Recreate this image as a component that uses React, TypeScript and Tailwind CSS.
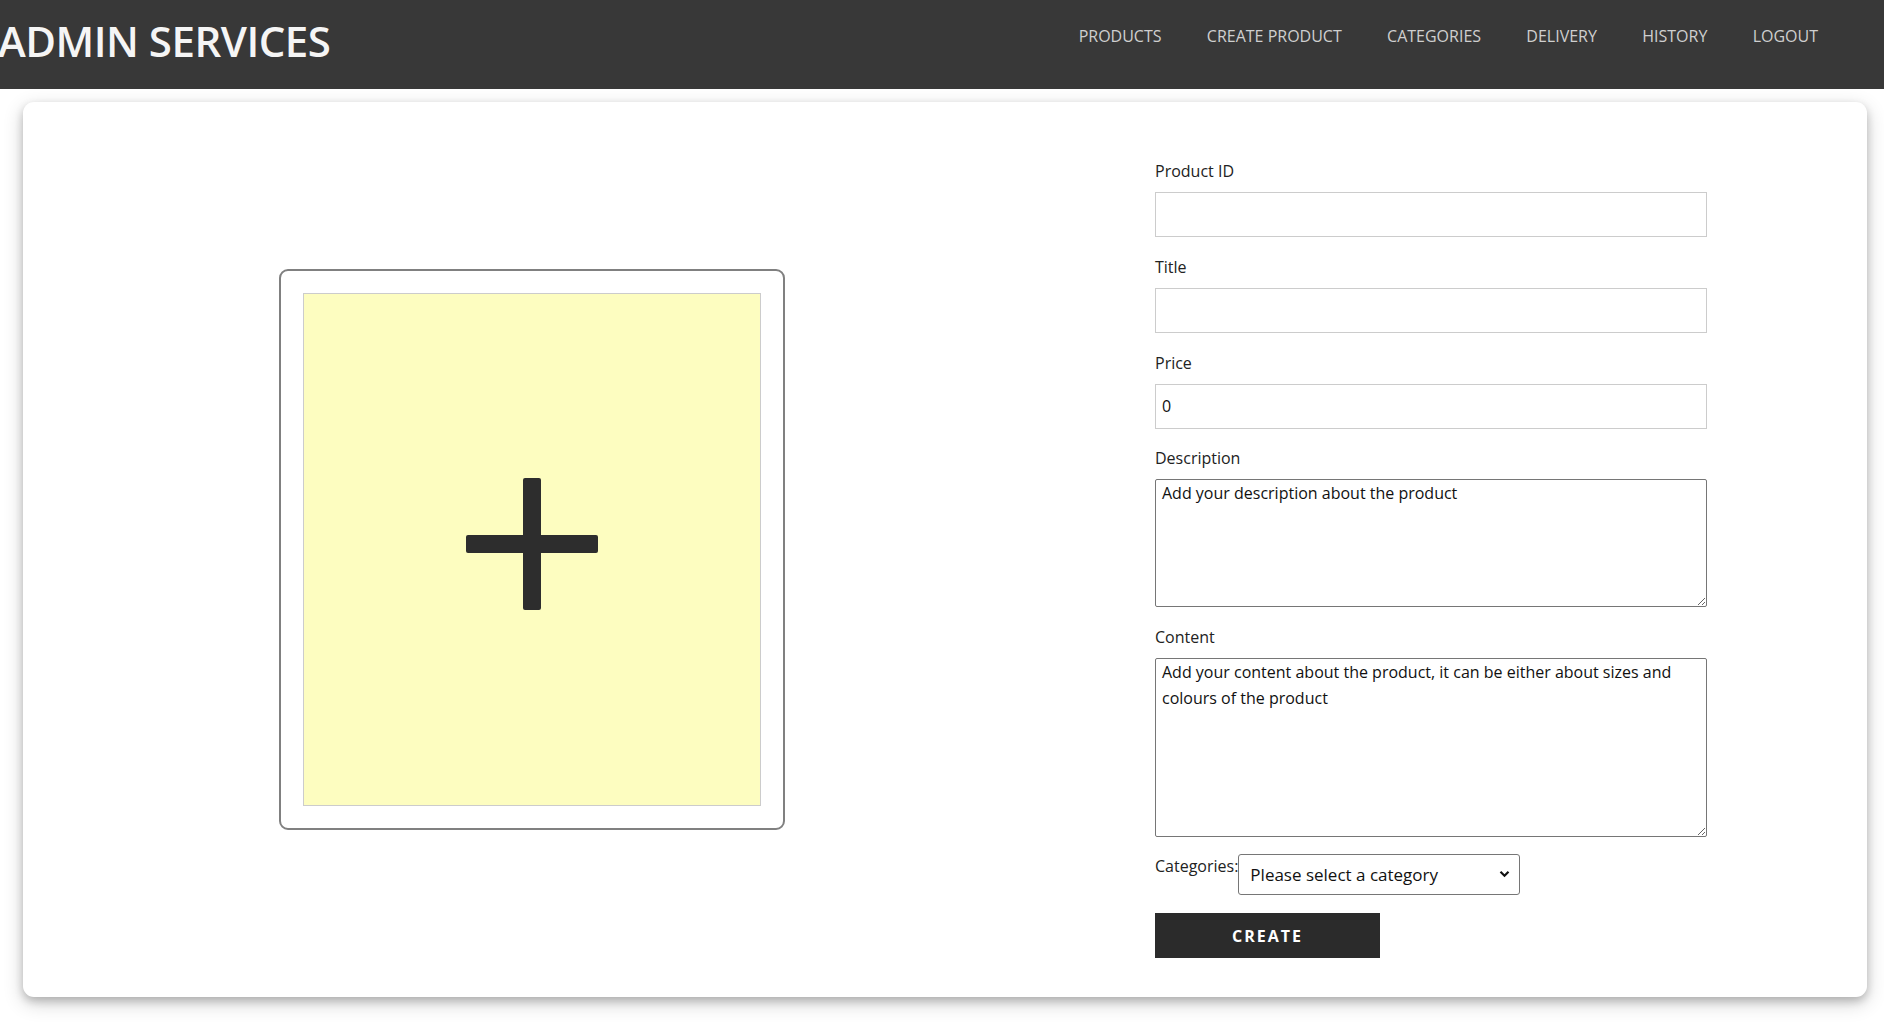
import React from "react";

const font = { fontFamily: '"Open Sans", "Noto Sans", sans-serif' };

function Field({ label, children, mb = "mb-[18px]" }: { label: string; children: React.ReactNode; mb?: string }) {
  return (
    <div className={"flex flex-col " + mb}>
      <label className="block text-[16px] leading-[24px] text-[#222] mb-[9px]">{label}</label>
      {children}
    </div>
  );
}

export default function App() {
  const navItems = ["PRODUCTS", "CREATE PRODUCT", "CATEGORIES", "DELIVERY", "HISTORY", "LOGOUT"];
  return (
    <div className="w-[1884px] h-[1027px] bg-white overflow-hidden" style={font}>
      <header className="h-[89px] bg-[#383838] flex justify-between items-start">
        <h1 className="ml-[-2px] pt-[20px] text-[42px] leading-none font-semibold text-[#f5f5f5] tracking-[-0.5px] whitespace-nowrap">
          ADMIN SERVICES
        </h1>
        <nav className="flex gap-[45.3px] pt-[24px] pr-[66px]">
          {navItems.map((n) => (
            <a key={n} className="text-[16px] leading-[24px] text-[#cfcfcf] whitespace-nowrap cursor-pointer">
              {n}
            </a>
          ))}
        </nav>
      </header>

      <main className="mt-[13px] ml-[23px] w-[1844px] h-[895px] bg-white rounded-[11px] shadow-[0_4px_8px_0_rgba(0,0,0,0.2),0_6px_20px_0_rgba(0,0,0,0.19)] flex items-center">
        <div className="ml-[256px] w-[506px] h-[561px] border-2 border-[#808080] rounded-[9px] p-[22px]">
          <div className="w-full h-full bg-[#fdfdc0] border border-[#cccccc] flex items-center justify-center pb-[12px]">
            <svg width="132" height="132" viewBox="0 0 132 132">
              <rect x="57" y="0" width="18" height="132" rx="2" fill="#2d2d2d" />
              <rect x="0" y="57" width="132" height="18" rx="2" fill="#2d2d2d" />
            </svg>
          </div>
        </div>

        <form className="self-start mt-[56.5px] ml-[370px] w-[552px] flex flex-col" onSubmit={(e) => e.preventDefault()}>
          <Field label="Product ID">
            <input className="h-[45px] border border-[#cccccc] px-[6px] text-[16px] outline-none" />
          </Field>
          <Field label="Title">
            <input className="h-[45px] border border-[#cccccc] px-[6px] text-[16px] outline-none" />
          </Field>
          <Field label="Price" mb="mb-[17px]">
            <input defaultValue="0" className="h-[45px] border border-[#cccccc] px-[6px] text-[16px] text-[#111] outline-none" />
          </Field>
          <Field label="Description">
            <textarea
              defaultValue="Add your description about the product"
              className="h-[128.5px] border border-[#767676] rounded-[2px] px-[6px] pt-0 text-[16px] leading-[26px] text-[#111] outline-none resize-y"
              style={font}
            />
          </Field>
          <Field label="Content" mb="mb-[17px]">
            <textarea
              defaultValue="Add your content about the product, it can be either about sizes and colours of the product"
              className="h-[179px] border border-[#767676] rounded-[2px] px-[6px] pt-0 text-[16px] leading-[26px] text-[#111] outline-none resize-y"
              style={font}
            />
          </Field>
          <div className="flex items-start">
            <span className="text-[16px] leading-[24px] text-[#222]">Categories:</span>
            <div className="relative w-[282px] h-[41px]">
              <select
                className="appearance-none w-full h-full border border-[#767676] rounded-[3px] bg-white pl-[11px] text-[17px] text-[#111] outline-none"
                style={font}
                defaultValue=""
              >
                <option value="">Please select a category</option>
              </select>
              <svg className="absolute right-[10px] top-[16px] pointer-events-none" width="11" height="8" viewBox="0 0 11 8">
                <path d="M1.5 1.8 L5.5 5.8 L9.5 1.8" fill="none" stroke="#111" strokeWidth="2.2" />
              </svg>
            </div>
          </div>
          <button
            type="submit"
            className="mt-[18px] w-[225px] h-[45px] bg-[#2b2b2b] text-white text-[16px] font-bold tracking-[2px]"
          >
            CREATE
          </button>
        </form>
      </main>
    </div>
  );
}
